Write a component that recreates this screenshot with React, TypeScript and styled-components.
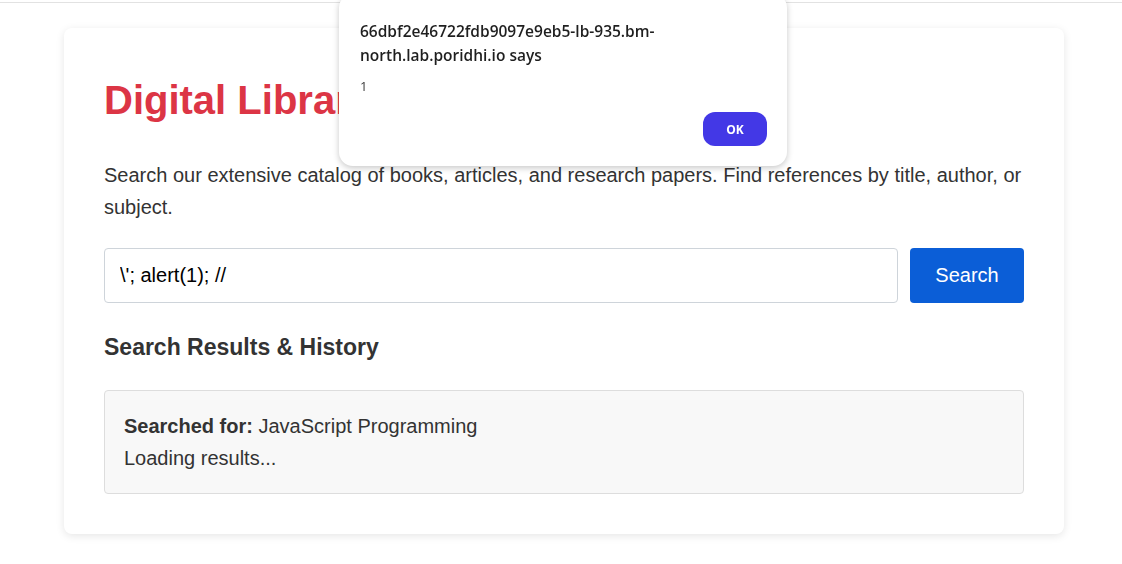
import React from "react";
import styled, { createGlobalStyle } from "styled-components";

const GlobalStyle = createGlobalStyle`
  html, body {
    margin: 0;
    padding: 0;
    background: #ffffff;
    font-family: "Liberation Sans", Arial, sans-serif;
    color: #333333;
  }
`;

const Page = styled.div`
  min-height: 564px;
  border-top: 1px solid #e2e2e2;
  margin-top: 2px;
  padding-top: 25px;
  box-sizing: border-box;
`;

const Card = styled.main`
  width: 1000px;
  margin: 0 0 0 64px;
  padding: 9px 40px 40px;
  box-sizing: border-box;
  background: #ffffff;
  border-radius: 8px;
  box-shadow: 0 2px 8px rgba(0, 0, 0, 0.1);
`;

const Title = styled.h1`
  margin: 0;
  padding-top: 40px;
  font-size: 40px;
  line-height: 46px;
  font-weight: bold;
  color: #dc3545;
`;

const Intro = styled.p`
  margin: 36px 0 25px;
  font-size: 20px;
  line-height: 32px;
  color: #333333;
`;

const SearchRow = styled.form`
  display: flex;
  gap: 12px;
  margin: 0;
`;

const SearchInput = styled.input`
  flex: 1;
  height: 55px;
  box-sizing: border-box;
  padding: 0 15px;
  border: 1px solid #ced4da;
  border-radius: 4px;
  font-family: "Liberation Sans", Arial, sans-serif;
  font-size: 20px;
  color: #000000;
  outline: none;
`;

const SearchButton = styled.button`
  width: 114px;
  height: 55px;
  border: none;
  border-radius: 4px;
  background: #0b5ed7;
  color: #ffffff;
  font-family: "Liberation Sans", Arial, sans-serif;
  font-size: 20px;
  cursor: pointer;
`;

const SectionTitle = styled.h2`
  margin: 31px 0 30px;
  font-size: 23px;
  line-height: 26px;
  font-weight: bold;
  color: #333333;
`;

const ResultsBox = styled.div`
  padding: 19px 19px 19px;
  background: #f8f8f8;
  border: 1px solid #dddddd;
  border-radius: 4px;
  font-size: 20px;
  line-height: 32px;
  color: #333333;
`;

const Line = styled.div``;

const Dialog = styled.div`
  position: fixed;
  top: -6px;
  left: 339px;
  width: 448px;
  box-sizing: border-box;
  padding: 25px 20px 20px 21px;
  background: #ffffff;
  border-radius: 14px;
  box-shadow: 0 2px 6px rgba(0, 0, 0, 0.22);
  font-family: "Open Sans", "Noto Sans", sans-serif;
`;

const DialogTitle = styled.div`
  font-size: 15.5px;
  line-height: 24px;
  font-weight: 600;
  color: #1f1f1f;
`;

const DialogMessage = styled.div`
  margin-top: 12px;
  font-size: 13px;
  line-height: 14px;
  color: #3c3c3c;
`;

const DialogActions = styled.div`
  display: flex;
  justify-content: flex-end;
  margin-top: 19px;
`;

const OkButton = styled.button`
  width: 64px;
  height: 34px;
  border: none;
  border-radius: 12px;
  background: #4338e6;
  color: #ffffff;
  font-family: "Open Sans", "Noto Sans", sans-serif;
  font-size: 12px;
  font-weight: 700;
`;

export default function App() {
  return (
    <>
      <GlobalStyle />
      <Page>
        <Card>
          <Title>Digital Library Search</Title>
          <Intro>
            Search our extensive catalog of books, articles, and research papers. Find references by
            title, author, or subject.
          </Intro>
          <SearchRow onSubmit={(e) => e.preventDefault()}>
            <SearchInput defaultValue="\'; alert(1); //" />
            <SearchButton type="submit">Search</SearchButton>
          </SearchRow>
          <SectionTitle>Search Results &amp; History</SectionTitle>
          <ResultsBox>
            <Line>
              <strong>Searched for:</strong> JavaScript Programming
            </Line>
            <Line>Loading results...</Line>
          </ResultsBox>
        </Card>
      </Page>
      <Dialog role="alertdialog">
        <DialogTitle>
          66dbf2e46722fdb9097e9eb5-lb-935.bm-
          <br />
          north.lab.poridhi.io says
        </DialogTitle>
        <DialogMessage>1</DialogMessage>
        <DialogActions>
          <OkButton>OK</OkButton>
        </DialogActions>
      </Dialog>
    </>
  );
}
